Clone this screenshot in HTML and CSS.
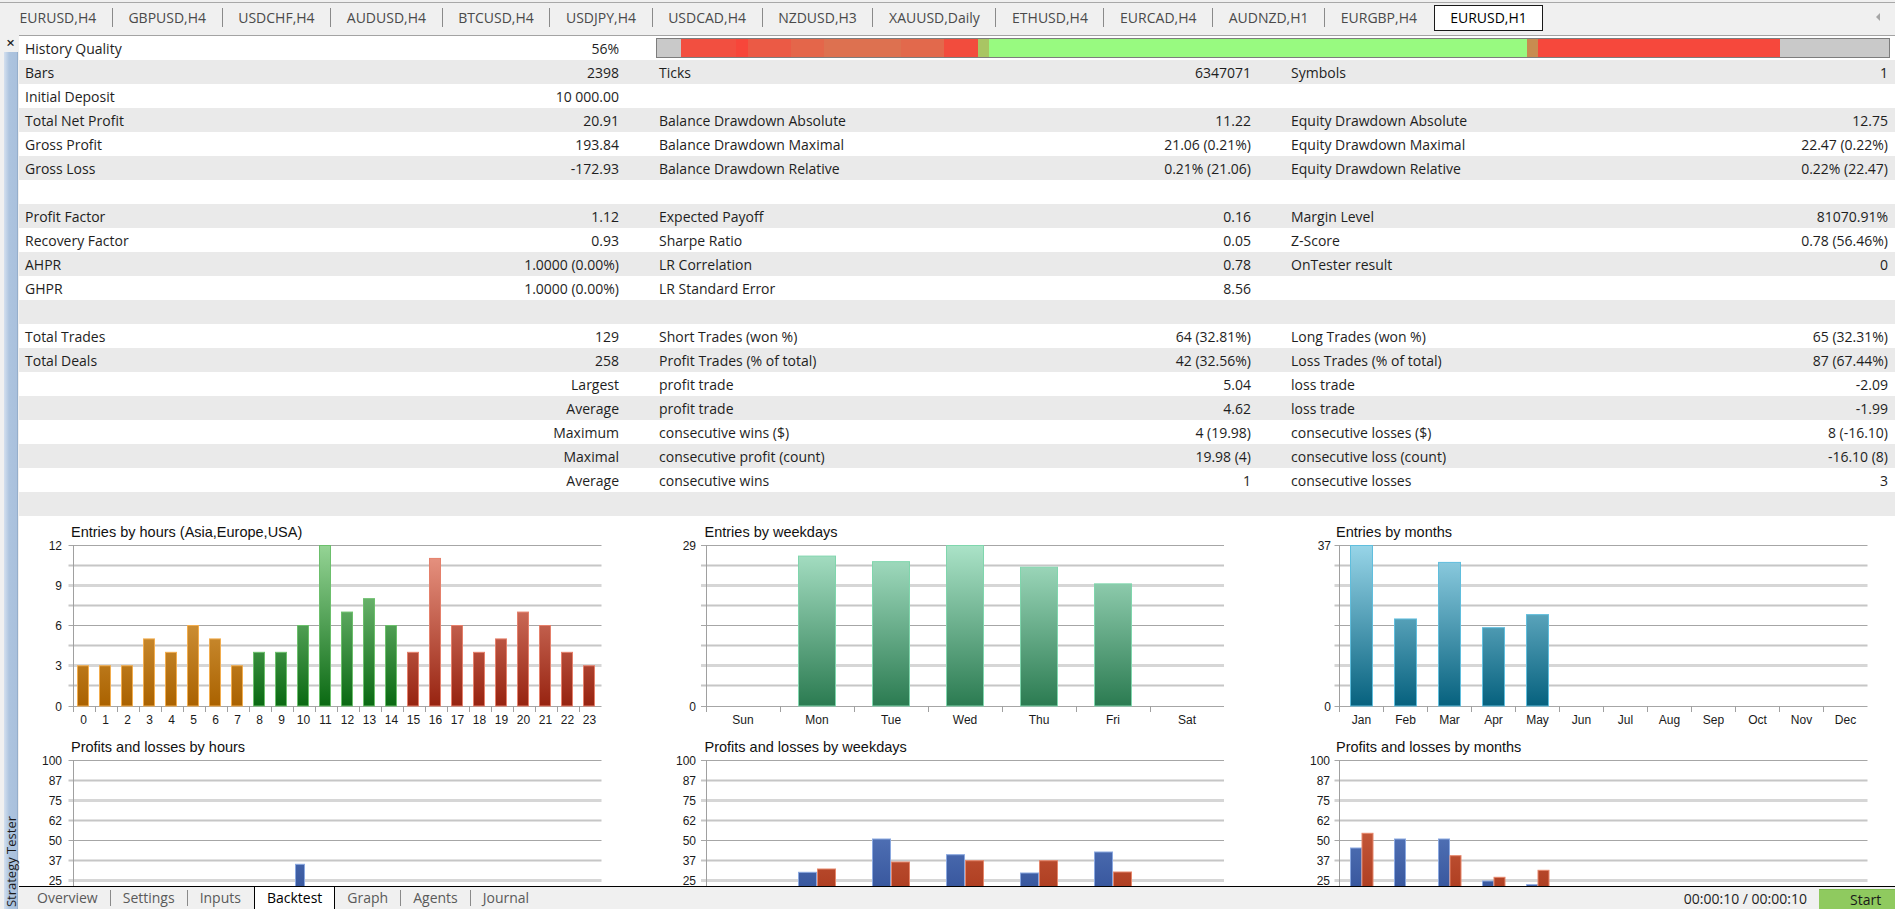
FILE: index.html
```html
<!DOCTYPE html>
<html lang="en">
<head>
<meta charset="utf-8">
<title>Strategy Tester - Backtest</title>
<link rel="stylesheet" href="styles.css">
</head>
<body>
<header class="topbar">
  <nav class="tabs">
    <span class="tab">EURUSD,H4</span>
    <span class="tab">GBPUSD,H4</span>
    <span class="tab">USDCHF,H4</span>
    <span class="tab">AUDUSD,H4</span>
    <span class="tab">BTCUSD,H4</span>
    <span class="tab">USDJPY,H4</span>
    <span class="tab">USDCAD,H4</span>
    <span class="tab">NZDUSD,H3</span>
    <span class="tab">XAUUSD,Daily</span>
    <span class="tab">ETHUSD,H4</span>
    <span class="tab">EURCAD,H4</span>
    <span class="tab">AUDNZD,H1</span>
    <span class="tab before-active">EURGBP,H4</span>
    <span class="tab active">EURUSD,H1</span>
    <span class="scroll-left"></span>
  </nav>
</header>
<div class="main">
  <aside class="sidebar">
    <span class="close">×</span>
    <div class="sidebar-bar"><span class="sidebar-label">Strategy Tester</span></div>
  </aside>
  <section class="panel">
    <div class="strip"></div>
    <div class="report">
      <div class="row">
        <div class="cell c1"><span>History Quality</span><span>56%</span></div>
        <div class="qbar"></div>
      </div>
      <div class="row">
        <div class="cell c1"><span>Bars</span><span>2398</span></div>
        <div class="cell c2"><span>Ticks</span><span>6347071</span></div>
        <div class="cell c3"><span>Symbols</span><span>1</span></div>
      </div>
      <div class="row">
        <div class="cell c1"><span>Initial Deposit</span><span>10 000.00</span></div>
      </div>
      <div class="row">
        <div class="cell c1"><span>Total Net Profit</span><span>20.91</span></div>
        <div class="cell c2"><span>Balance Drawdown Absolute</span><span>11.22</span></div>
        <div class="cell c3"><span>Equity Drawdown Absolute</span><span>12.75</span></div>
      </div>
      <div class="row">
        <div class="cell c1"><span>Gross Profit</span><span>193.84</span></div>
        <div class="cell c2"><span>Balance Drawdown Maximal</span><span>21.06 (0.21%)</span></div>
        <div class="cell c3"><span>Equity Drawdown Maximal</span><span>22.47 (0.22%)</span></div>
      </div>
      <div class="row">
        <div class="cell c1"><span>Gross Loss</span><span>-172.93</span></div>
        <div class="cell c2"><span>Balance Drawdown Relative</span><span>0.21% (21.06)</span></div>
        <div class="cell c3"><span>Equity Drawdown Relative</span><span>0.22% (22.47)</span></div>
      </div>
      <div class="row"></div>
      <div class="row">
        <div class="cell c1"><span>Profit Factor</span><span>1.12</span></div>
        <div class="cell c2"><span>Expected Payoff</span><span>0.16</span></div>
        <div class="cell c3"><span>Margin Level</span><span>81070.91%</span></div>
      </div>
      <div class="row">
        <div class="cell c1"><span>Recovery Factor</span><span>0.93</span></div>
        <div class="cell c2"><span>Sharpe Ratio</span><span>0.05</span></div>
        <div class="cell c3"><span>Z-Score</span><span>0.78 (56.46%)</span></div>
      </div>
      <div class="row">
        <div class="cell c1"><span>AHPR</span><span>1.0000 (0.00%)</span></div>
        <div class="cell c2"><span>LR Correlation</span><span>0.78</span></div>
        <div class="cell c3"><span>OnTester result</span><span>0</span></div>
      </div>
      <div class="row">
        <div class="cell c1"><span>GHPR</span><span>1.0000 (0.00%)</span></div>
        <div class="cell c2"><span>LR Standard Error</span><span>8.56</span></div>
      </div>
      <div class="row"></div>
      <div class="row">
        <div class="cell c1"><span>Total Trades</span><span>129</span></div>
        <div class="cell c2"><span>Short Trades (won %)</span><span>64 (32.81%)</span></div>
        <div class="cell c3"><span>Long Trades (won %)</span><span>65 (32.31%)</span></div>
      </div>
      <div class="row">
        <div class="cell c1"><span>Total Deals</span><span>258</span></div>
        <div class="cell c2"><span>Profit Trades (% of total)</span><span>42 (32.56%)</span></div>
        <div class="cell c3"><span>Loss Trades (% of total)</span><span>87 (67.44%)</span></div>
      </div>
      <div class="row">
        <div class="cell c1 end"><span>Largest</span></div>
        <div class="cell c2"><span>profit trade</span><span>5.04</span></div>
        <div class="cell c3"><span>loss trade</span><span>-2.09</span></div>
      </div>
      <div class="row">
        <div class="cell c1 end"><span>Average</span></div>
        <div class="cell c2"><span>profit trade</span><span>4.62</span></div>
        <div class="cell c3"><span>loss trade</span><span>-1.99</span></div>
      </div>
      <div class="row">
        <div class="cell c1 end"><span>Maximum</span></div>
        <div class="cell c2"><span>consecutive wins ($)</span><span>4 (19.98)</span></div>
        <div class="cell c3"><span>consecutive losses ($)</span><span>8 (-16.10)</span></div>
      </div>
      <div class="row">
        <div class="cell c1 end"><span>Maximal</span></div>
        <div class="cell c2"><span>consecutive profit (count)</span><span>19.98 (4)</span></div>
        <div class="cell c3"><span>consecutive loss (count)</span><span>-16.10 (8)</span></div>
      </div>
      <div class="row">
        <div class="cell c1 end"><span>Average</span></div>
        <div class="cell c2"><span>consecutive wins</span><span>1</span></div>
        <div class="cell c3"><span>consecutive losses</span><span>3</span></div>
      </div>
      <div class="row"></div>
    </div>

    <div class="charts">
      <!-- Entries by hours -->
      <svg class="chart" width="621" height="215" viewBox="0 0 621 215">
        <defs>
          <linearGradient id="gOr" gradientUnits="userSpaceOnUse" x1="0" y1="29" x2="0" y2="190"><stop offset="0" stop-color="#ecb866"/><stop offset="1" stop-color="#aa6200"/></linearGradient>
          <linearGradient id="gGr" gradientUnits="userSpaceOnUse" x1="0" y1="29" x2="0" y2="190"><stop offset="0" stop-color="#95d495"/><stop offset="1" stop-color="#0a6912"/></linearGradient>
          <linearGradient id="gRd" gradientUnits="userSpaceOnUse" x1="0" y1="29" x2="0" y2="190"><stop offset="0" stop-color="#ec9a88"/><stop offset="1" stop-color="#972310"/></linearGradient>
        </defs>
        <text class="title" x="52" y="20.5">Entries by hours (Asia,Europe,USA)</text>
        <path class="grid-light" d="M49.5 49.5H582.5M49.5 89.5H582.5M49.5 129.5H582.5M49.5 169.5H582.5"/>
        <path class="grid-mid" d="M49.5 69.5H582.5M49.5 149.5H582.5"/>
        <path class="grid-dark" d="M49.5 29.5H582.5M49.5 109.5H582.5M49.5 190.5H582.5"/>
        <path class="axis" d="M54.5 29V196M76.5 190V196M98.5 190V196M120.5 190V196M142.5 190V196M164.5 190V196M186.5 190V196M208.5 190V196M230.5 190V196M252.5 190V196M274.5 190V196M296.5 190V196M318.5 190V196M340.5 190V196M362.5 190V196M384.5 190V196M406.5 190V196M428.5 190V196M450.5 190V196M472.5 190V196M494.5 190V196M516.5 190V196M538.5 190V196M560.5 190V196"/>
        <text class="yl" x="43" y="33.5">12</text>
        <text class="yl" x="43" y="73.5">9</text>
        <text class="yl" x="43" y="113.5">6</text>
        <text class="yl" x="43" y="153.5">3</text>
        <text class="yl" x="43" y="194.5">0</text>
        <rect class="b-or" x="58.5" y="149.75" width="11" height="40.25"/>
        <rect class="b-or" x="80.5" y="149.75" width="11" height="40.25"/>
        <rect class="b-or" x="102.5" y="149.75" width="11" height="40.25"/>
        <rect class="b-or" x="124.5" y="122.92" width="11" height="67.08"/>
        <rect class="b-or" x="146.5" y="136.33" width="11" height="53.67"/>
        <rect class="b-or" x="168.5" y="109.5" width="11" height="80.5"/>
        <rect class="b-or" x="190.5" y="122.92" width="11" height="67.08"/>
        <rect class="b-or" x="212.5" y="149.75" width="11" height="40.25"/>
        <rect class="b-gr" x="234.5" y="136.33" width="11" height="53.67"/>
        <rect class="b-gr" x="256.5" y="136.33" width="11" height="53.67"/>
        <rect class="b-gr" x="278.5" y="109.5" width="11" height="80.5"/>
        <rect class="b-gr" x="300.5" y="29.5" width="11" height="160.5"/>
        <rect class="b-gr" x="322.5" y="96.08" width="11" height="93.92"/>
        <rect class="b-gr" x="344.5" y="82.67" width="11" height="107.33"/>
        <rect class="b-gr" x="366.5" y="109.5" width="11" height="80.5"/>
        <rect class="b-rd" x="388.5" y="136.33" width="11" height="53.67"/>
        <rect class="b-rd" x="410.5" y="42.42" width="11" height="147.58"/>
        <rect class="b-rd" x="432.5" y="109.5" width="11" height="80.5"/>
        <rect class="b-rd" x="454.5" y="136.33" width="11" height="53.67"/>
        <rect class="b-rd" x="476.5" y="122.92" width="11" height="67.08"/>
        <rect class="b-rd" x="498.5" y="96.08" width="11" height="93.92"/>
        <rect class="b-rd" x="520.5" y="109.5" width="11" height="80.5"/>
        <rect class="b-rd" x="542.5" y="136.33" width="11" height="53.67"/>
        <rect class="b-rd" x="564.5" y="149.75" width="11" height="40.25"/>
        <text class="xl" x="64.5" y="208">0</text>
        <text class="xl" x="86.5" y="208">1</text>
        <text class="xl" x="108.5" y="208">2</text>
        <text class="xl" x="130.5" y="208">3</text>
        <text class="xl" x="152.5" y="208">4</text>
        <text class="xl" x="174.5" y="208">5</text>
        <text class="xl" x="196.5" y="208">6</text>
        <text class="xl" x="218.5" y="208">7</text>
        <text class="xl" x="240.5" y="208">8</text>
        <text class="xl" x="262.5" y="208">9</text>
        <text class="xl" x="284.5" y="208">10</text>
        <text class="xl" x="306.5" y="208">11</text>
        <text class="xl" x="328.5" y="208">12</text>
        <text class="xl" x="350.5" y="208">13</text>
        <text class="xl" x="372.5" y="208">14</text>
        <text class="xl" x="394.5" y="208">15</text>
        <text class="xl" x="416.5" y="208">16</text>
        <text class="xl" x="438.5" y="208">17</text>
        <text class="xl" x="460.5" y="208">18</text>
        <text class="xl" x="482.5" y="208">19</text>
        <text class="xl" x="504.5" y="208">20</text>
        <text class="xl" x="526.5" y="208">21</text>
        <text class="xl" x="548.5" y="208">22</text>
        <text class="xl" x="570.5" y="208">23</text>
      </svg>

      <!-- Entries by weekdays -->
      <svg class="chart" width="630" height="215" viewBox="0 0 630 215">
        <defs>
          <linearGradient id="gMint" gradientUnits="userSpaceOnUse" x1="0" y1="29" x2="0" y2="190"><stop offset="0" stop-color="#abe3c8"/><stop offset="1" stop-color="#2b7b51"/></linearGradient>
        </defs>
        <text class="title" x="64.5" y="20.5">Entries by weekdays</text>
        <path class="grid-light" d="M61 49.5H584M61 89.5H584M61 129.5H584M61 169.5H584"/>
        <path class="grid-mid" d="M61 69.5H584M61 149.5H584"/>
        <path class="grid-dark" d="M61 29.5H584M61 109.5H584M61 190.5H584"/>
        <path class="axis" d="M66.5 29V196M140.5 190V196M214.5 190V196M288.5 190V196M362.5 190V196M436.5 190V196M510.5 190V196"/>
        <text class="yl" x="56" y="33.5">29</text>
        <text class="yl" x="56" y="194.5">0</text>
        <rect class="b-mint" x="158.5" y="40.1" width="37" height="149.9"/>
        <rect class="b-mint" x="232.5" y="45.66" width="37" height="144.34"/>
        <rect class="b-mint" x="306.5" y="29.5" width="37" height="160.5"/>
        <rect class="b-mint" x="380.5" y="51.21" width="37" height="138.79"/>
        <rect class="b-mint" x="454.5" y="67.86" width="37" height="122.14"/>
        <text class="xl" x="103" y="208">Sun</text>
        <text class="xl" x="177" y="208">Mon</text>
        <text class="xl" x="251" y="208">Tue</text>
        <text class="xl" x="325" y="208">Wed</text>
        <text class="xl" x="399" y="208">Thu</text>
        <text class="xl" x="473" y="208">Fri</text>
        <text class="xl" x="547" y="208">Sat</text>
      </svg>

      <!-- Entries by months -->
      <svg class="chart" width="621" height="215" viewBox="0 0 621 215">
        <defs>
          <linearGradient id="gTeal" gradientUnits="userSpaceOnUse" x1="0" y1="29" x2="0" y2="190"><stop offset="0" stop-color="#98d5e8"/><stop offset="1" stop-color="#06617e"/></linearGradient>
        </defs>
        <text class="title" x="66" y="20.5">Entries by months</text>
        <path class="grid-light" d="M64.5 49.5H597.5M64.5 89.5H597.5M64.5 129.5H597.5M64.5 169.5H597.5"/>
        <path class="grid-mid" d="M64.5 69.5H597.5M64.5 149.5H597.5"/>
        <path class="grid-dark" d="M64.5 29.5H597.5M64.5 109.5H597.5M64.5 190.5H597.5"/>
        <path class="axis" d="M69.5 29V196M113.5 190V196M157.5 190V196M201.5 190V196M245.5 190V196M289.5 190V196M333.5 190V196M377.5 190V196M421.5 190V196M465.5 190V196M509.5 190V196M553.5 190V196"/>
        <text class="yl" x="61" y="33.5">37</text>
        <text class="yl" x="61" y="194.5">0</text>
        <rect class="b-teal" x="80.5" y="29.5" width="22" height="160.5"/>
        <rect class="b-teal" x="124.5" y="102.97" width="22" height="87.03"/>
        <rect class="b-teal" x="168.5" y="46.41" width="22" height="143.59"/>
        <rect class="b-teal" x="212.5" y="111.68" width="22" height="78.32"/>
        <rect class="b-teal" x="256.5" y="98.62" width="22" height="91.38"/>
        <text class="xl" x="91.5" y="208">Jan</text>
        <text class="xl" x="135.5" y="208">Feb</text>
        <text class="xl" x="179.5" y="208">Mar</text>
        <text class="xl" x="223.5" y="208">Apr</text>
        <text class="xl" x="267.5" y="208">May</text>
        <text class="xl" x="311.5" y="208">Jun</text>
        <text class="xl" x="355.5" y="208">Jul</text>
        <text class="xl" x="399.5" y="208">Aug</text>
        <text class="xl" x="443.5" y="208">Sep</text>
        <text class="xl" x="487.5" y="208">Oct</text>
        <text class="xl" x="531.5" y="208">Nov</text>
        <text class="xl" x="575.5" y="208">Dec</text>
      </svg>

      <!-- Profits and losses by hours -->
      <svg class="chart" width="621" height="155" viewBox="0 0 621 155">
        <defs>
          <linearGradient id="gBl1" gradientUnits="userSpaceOnUse" x1="0" y1="29" x2="0" y2="190"><stop offset="0" stop-color="#7093d4"/><stop offset="1" stop-color="#2a4890"/></linearGradient>
        </defs>
        <text class="title" x="52" y="20.5">Profits and losses by hours</text>
        <path class="grid-light" d="M49.5 49.5H582.5M49.5 89.5H582.5M49.5 129.5H582.5"/>
        <path class="grid-mid" d="M49.5 69.5H582.5M49.5 149.5H582.5"/>
        <path class="grid-dark" d="M49.5 29.5H582.5M49.5 109.5H582.5"/>
        <path class="axis" d="M54.5 29V155"/>
        <text class="yl" x="43" y="33.5">100</text>
        <text class="yl" x="43" y="53.5">87</text>
        <text class="yl" x="43" y="73.5">75</text>
        <text class="yl" x="43" y="93.5">62</text>
        <text class="yl" x="43" y="113.5">50</text>
        <text class="yl" x="43" y="133.5">37</text>
        <text class="yl" x="43" y="153.5">25</text>
        <rect class="b-blue1" x="276.5" y="133.3" width="9" height="56.7"/>
      </svg>

      <!-- Profits and losses by weekdays -->
      <svg class="chart" width="630" height="155" viewBox="0 0 630 155">
        <defs>
          <linearGradient id="gBl2" gradientUnits="userSpaceOnUse" x1="0" y1="29" x2="0" y2="190"><stop offset="0" stop-color="#7093d4"/><stop offset="1" stop-color="#2a4890"/></linearGradient>
          <linearGradient id="gBr2" gradientUnits="userSpaceOnUse" x1="0" y1="29" x2="0" y2="190"><stop offset="0" stop-color="#dc7656"/><stop offset="1" stop-color="#a33014"/></linearGradient>
        </defs>
        <text class="title" x="64.5" y="20.5">Profits and losses by weekdays</text>
        <path class="grid-light" d="M61 49.5H584M61 89.5H584M61 129.5H584"/>
        <path class="grid-mid" d="M61 69.5H584M61 149.5H584"/>
        <path class="grid-dark" d="M61 29.5H584M61 109.5H584"/>
        <path class="axis" d="M66.5 29V155"/>
        <text class="yl" x="56" y="33.5">100</text>
        <text class="yl" x="56" y="53.5">87</text>
        <text class="yl" x="56" y="73.5">75</text>
        <text class="yl" x="56" y="93.5">62</text>
        <text class="yl" x="56" y="113.5">50</text>
        <text class="yl" x="56" y="133.5">37</text>
        <text class="yl" x="56" y="153.5">25</text>
        <rect class="b-blue2" x="158.5" y="141.3" width="18" height="48.7"/>
        <rect class="b-brick2" x="177.5" y="138" width="18" height="52"/>
        <rect class="b-blue2" x="232.5" y="108" width="18" height="82"/>
        <rect class="b-brick2" x="251.5" y="131" width="18" height="59"/>
        <rect class="b-blue2" x="306.5" y="123.7" width="18" height="66.3"/>
        <rect class="b-brick2" x="325.5" y="129.7" width="18" height="60.3"/>
        <rect class="b-blue2" x="380.5" y="142" width="18" height="48"/>
        <rect class="b-brick2" x="399.5" y="129.7" width="18" height="60.3"/>
        <rect class="b-blue2" x="454.5" y="121" width="18" height="69"/>
        <rect class="b-brick2" x="473.5" y="141" width="18" height="49"/>
      </svg>

      <!-- Profits and losses by months -->
      <svg class="chart" width="621" height="155" viewBox="0 0 621 155">
        <defs>
          <linearGradient id="gBl3" gradientUnits="userSpaceOnUse" x1="0" y1="29" x2="0" y2="190"><stop offset="0" stop-color="#7093d4"/><stop offset="1" stop-color="#2a4890"/></linearGradient>
          <linearGradient id="gBr3" gradientUnits="userSpaceOnUse" x1="0" y1="29" x2="0" y2="190"><stop offset="0" stop-color="#dc7656"/><stop offset="1" stop-color="#a33014"/></linearGradient>
        </defs>
        <text class="title" x="66" y="20.5">Profits and losses by months</text>
        <path class="grid-light" d="M64.5 49.5H597.5M64.5 89.5H597.5M64.5 129.5H597.5"/>
        <path class="grid-mid" d="M64.5 69.5H597.5M64.5 149.5H597.5"/>
        <path class="grid-dark" d="M64.5 29.5H597.5M64.5 109.5H597.5"/>
        <path class="axis" d="M69.5 29V155"/>
        <text class="yl" x="60" y="33.5">100</text>
        <text class="yl" x="60" y="53.5">87</text>
        <text class="yl" x="60" y="73.5">75</text>
        <text class="yl" x="60" y="93.5">62</text>
        <text class="yl" x="60" y="113.5">50</text>
        <text class="yl" x="60" y="133.5">37</text>
        <text class="yl" x="60" y="153.5">25</text>
        <rect class="b-blue3" x="80.5" y="117" width="11" height="73"/>
        <rect class="b-brick3" x="92" y="102.3" width="11" height="87.7"/>
        <rect class="b-blue3" x="124.5" y="108" width="11" height="82"/>
        <rect class="b-blue3" x="168.5" y="108" width="11" height="82"/>
        <rect class="b-brick3" x="180" y="124.7" width="11" height="65.3"/>
        <rect class="b-blue3" x="212.5" y="150" width="11" height="40"/>
        <rect class="b-brick3" x="224" y="146.3" width="11" height="43.7"/>
        <rect class="b-blue3" x="256.5" y="153.7" width="11" height="36.3"/>
        <rect class="b-brick3" x="268" y="139.3" width="11" height="50.7"/>
      </svg>
    </div>

    <footer class="bottombar">
      <span class="btab">Overview</span>
      <span class="btab">Settings</span>
      <span class="btab before-active">Inputs</span>
      <span class="btab active">Backtest</span>
      <span class="btab">Graph</span>
      <span class="btab">Agents</span>
      <span class="btab last">Journal</span>
      <span class="elapsed">00:00:10 / 00:00:10</span>
      <span class="start">Start</span>
    </footer>
  </section>
</div>
</body>
</html>
```
FILE: styles.css
```css
* { box-sizing: border-box; }
html, body { margin: 0; padding: 0; }
body {
  width: 1895px;
  height: 909px;
  overflow: hidden;
  background: #f0f0f0;
  font-family: "Open Sans", "Noto Sans", sans-serif;
  font-size: 14px;
  color: #1e1e1e;
  display: flex;
  flex-direction: column;
}

/* ---------- top symbol tabs ---------- */
.topbar {
  height: 31px;
  flex: none;
  padding-top: 2px;
}
.tabs {
  height: 29px;
  border-top: 1px solid #a8a8a8;
  display: flex;
  align-items: center;
  padding-left: 4px;
}
.tab {
  padding: 0 15.6px;
  height: 19px;
  line-height: 19px;
  border-right: 1px solid #8a8a8a;
  color: #4a4a4a;
  white-space: nowrap;
}
.tab.before-active { border-right-color: transparent; }
.tab.active {
  align-self: flex-end;
  height: 26px;
  line-height: 24px;
  border: 1px solid #1a1a1a;
  background: #fff;
  color: #000;
}
.scroll-left {
  margin-left: auto;
  margin-right: 15px;
  width: 0;
  height: 0;
  border-top: 4px solid transparent;
  border-bottom: 4px solid transparent;
  border-right: 4px solid #a6a6a6;
}

/* ---------- main area ---------- */
.main {
  flex: 1;
  display: flex;
  min-height: 0;
}
.sidebar {
  width: 19px;
  flex: none;
  display: flex;
  flex-direction: column;
}
.close {
  height: 21px;
  line-height: 22px;
  text-align: center;
  font-size: 15px;
  font-weight: 600;
  color: #222;
  padding-left: 2px;
}
.sidebar-bar {
  flex: 1;
  margin: 0 1px 0 4px;
  background: linear-gradient(to right, #d4e0ef, #adc4df 40%, #a9c0dc);
  border-right: 1px solid #95aecb;
  display: flex;
  flex-direction: column;
  justify-content: flex-end;
  align-items: center;
  padding-bottom: 2px;
}
.sidebar-label {
  writing-mode: vertical-rl;
  transform: rotate(180deg);
  font-size: 13px;
  line-height: 14px;
  color: #1a1a1a;
  white-space: nowrap;
}

.panel {
  flex: 1;
  min-width: 0;
  display: flex;
  flex-direction: column;
  background: #fff;
}
.strip {
  height: 5px;
  flex: none;
  background: #f0f0f0;
  border-bottom: 1px solid #a3a3a3;
}

/* ---------- report table ---------- */
.report { flex: none; }
.row {
  display: grid;
  grid-template-columns: 613px 632px 627px;
  height: 24px;
  line-height: 25px;
}
.row:nth-child(even) { background: #eaeaea; }
.cell {
  display: flex;
  justify-content: space-between;
  white-space: nowrap;
  overflow: hidden;
}
.cell.end { justify-content: flex-end; }
.c1 { padding: 0 13px 0 6px; }
.c2 { padding: 0 13px 0 27px; }
.c3 { padding: 0 3px 0 27px; }

.qbar {
  grid-column: 2 / 4;
  margin: 2px 1px 2px 24px;
  border: 1px solid #7d7d7d;
  background: linear-gradient(to right,
    #c9c9c9 0 24px,
    #f24f40 24px 79px,
    #f7463a 79px 91px,
    #eb5a45 91px 134px,
    #e4664a 134px 167px,
    #dd7150 167px 244px,
    #e2694c 244px 287px,
    #f24c3d 287px 321px,
    #a9c563 321px 332px,
    #98fa80 332px 870px,
    #c88c50 870px 881px,
    #f6483c 881px 1123px,
    #c9c9c9 1123px);
}

/* ---------- charts ---------- */
.charts {
  flex: 1;
  min-height: 0;
  overflow: hidden;
  display: grid;
  grid-template-columns: 621px 630px 621px;
  grid-template-rows: 215px 155px;
}
.chart { display: block; }
.chart text {
  font-family: "Liberation Sans", Arial, sans-serif;
  font-size: 12px;
  fill: #1a1a1a;
}
.chart .title { font-size: 14.5px; fill: #111; }
.chart .yl { text-anchor: end; }
.chart .xl { text-anchor: middle; }

.grid-dark { fill: none; stroke: #a6a6a6; stroke-width: 1; }
.grid-mid { fill: none; stroke: #d6d6d6; stroke-width: 3; }
.grid-light { fill: none; stroke: #c6c6c6; stroke-width: 2; }
.axis { fill: none; stroke: #a0a0a0; stroke-width: 1; }

.b-or { fill: url(#gOr); stroke: #f2ad4e; stroke-width: 1; }
.b-gr { fill: url(#gGr); stroke: #6cbf6c; stroke-width: 1; }
.b-rd { fill: url(#gRd); stroke: #e5806b; stroke-width: 1; }
.b-mint { fill: url(#gMint); stroke: #80d6ad; stroke-width: 1; }
.b-teal { fill: url(#gTeal); stroke: #60bedd; stroke-width: 1; }
.b-blue1 { fill: url(#gBl1); stroke: #8aa8e0; stroke-width: 1; }
.b-blue2 { fill: url(#gBl2); stroke: #8aa8e0; stroke-width: 1; }
.b-blue3 { fill: url(#gBl3); stroke: #8aa8e0; stroke-width: 1; }
.b-brick2 { fill: url(#gBr2); stroke: #e6866a; stroke-width: 1; }
.b-brick3 { fill: url(#gBr3); stroke: #e6866a; stroke-width: 1; }

/* ---------- bottom tabs ---------- */
.bottombar {
  height: 23px;
  flex: none;
  border-top: 1px solid #000;
  background: #f0f0f0;
  display: flex;
  align-items: center;
  padding-left: 6px;
}
.btab {
  padding: 0 12px;
  height: 16px;
  line-height: 16px;
  border-right: 1px solid #8a8a8a;
  color: #5a5a5a;
  white-space: nowrap;
}
.btab.before-active, .btab.last { border-right-color: transparent; }
.btab.active {
  align-self: stretch;
  height: auto;
  line-height: 22px;
  background: #fff;
  border-left: 1px solid #000;
  border-right: 1px solid #000;
  color: #000;
}
.elapsed {
  margin-left: auto;
  margin-right: 12px;
  color: #1e1e1e;
  white-space: nowrap;
}
.start {
  align-self: flex-end;
  width: 76px;
  height: 20px;
  line-height: 20px;
  padding-left: 31px;
  background: #8fca5f;
  border-top: 1px solid #7fbb50;
  color: #1a1a1a;
}
```
